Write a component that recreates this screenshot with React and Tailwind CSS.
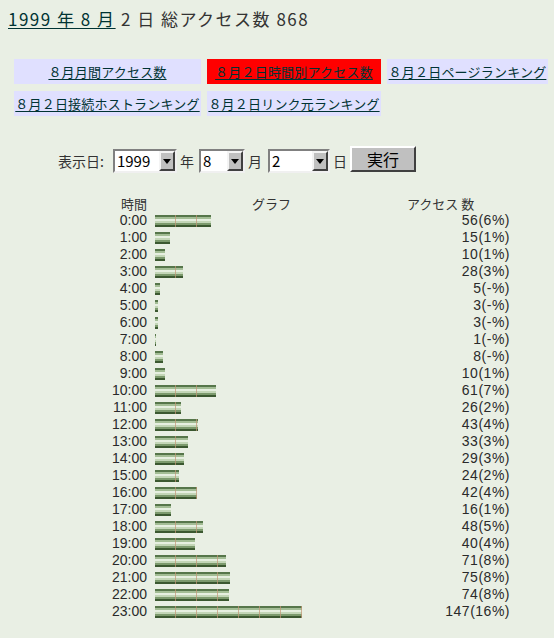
import React from 'react';

// アクセス集計ページ（時間別）
const hours = [
  [56, '6'], [15, '1'], [10, '1'], [28, '3'], [5, '-'], [3, '-'],
  [3, '-'], [1, '-'], [8, '-'], [10, '1'], [61, '7'], [26, '2'],
  [43, '4'], [33, '3'], [29, '3'], [24, '2'], [42, '4'], [16, '1'],
  [48, '5'], [40, '4'], [71, '8'], [75, '8'], [74, '8'], [147, '16'],
];

const navLinks = [
  { label: '８月月間アクセス数', active: false },
  { label: '８月２日時間別アクセス数', active: true },
  { label: '８月２日ページランキング', active: false },
  { label: '８月２日接続ホストランキング', active: false },
  { label: '８月２日リンク元ランキング', active: false },
];

const Select = ({ value, width }) => (
  <div
    className={`flex h-[24px] items-stretch border-2 border-t-[#808080] border-l-[#808080] border-b-[#f0f0f0] border-r-[#f0f0f0] bg-white ${width}`}
  >
    <span className="flex-1 pl-[2px] text-[15px] leading-[20px] text-black">{value}</span>
    <span className="flex w-[16px] items-center justify-center border-2 border-t-[#f4f4f4] border-l-[#f4f4f4] border-b-[#404040] border-r-[#404040] bg-[#c0c0c0]">
      <svg width="8" height="5" viewBox="0 0 8 5">
        <path d="M0 0h8L4 5z" fill="#000" />
      </svg>
    </span>
  </div>
);

const Bar = ({ count }) => (
  <div
    className="h-[12px] bg-[repeating-linear-gradient(90deg,transparent_0_20px,rgba(196,150,118,0.7)_20px_21px),linear-gradient(to_bottom,#56764a_0_2px,#a3bd95_2px_4px,#e6efe0_4px_6px,#c3d6b7_6px_8px,#7c9a6d_8px_10px,#3b5830_10px_12px)]"
    style={{ width: `${count}px` }}
  />
);

export default function App() {
  return (
    <div className="min-h-[638px] w-[554px] bg-[#e9efe4] font-['Noto_Sans_CJK_JP','Noto_Sans',sans-serif] text-[#333]">
      <div className="px-[8px] pt-[7px] text-[17px] leading-[24px] tracking-[1.5px]">
        <a className="text-[#003333] underline decoration-1 underline-offset-2">1999 年 8 月</a>
        <span> 2 日 総アクセス数 868</span>
      </div>

      <div className="ml-[14px] mt-[28px] grid w-[535px] grid-cols-[187px_174px_161px] gap-x-[6px] gap-y-[7px]">
        {navLinks.map((l) => (
          <div
            key={l.label}
            className={`flex h-[25px] items-center justify-center whitespace-nowrap text-[13px] leading-[18px] tracking-[0.2px] ${l.active ? 'bg-[#ff0000]' : 'bg-[#e0e0ff]'}`}
          >
            <a className="text-[#003333] underline decoration-1 underline-offset-2">{l.label}</a>
          </div>
        ))}
      </div>

      <div className="ml-[58px] mt-[30px] flex items-end gap-[3px] text-[14px] leading-[20px]">
        <span className="mb-[2px] mr-[6px]">表示日:</span>
        <Select value="1999" width="w-[64px]" />
        <span className="mb-[2px] mr-[2px]">年</span>
        <Select value="8" width="w-[46px]" />
        <span className="mb-[2px] mr-[3px]">月</span>
        <Select value="2" width="w-[62px]" />
        <span className="mb-[2px]">日</span>
        <button className="mb-[1px] h-[26px] w-[66px] border-2 border-t-[#ffffff] border-l-[#ffffff] border-b-[#404040] border-r-[#404040] bg-[#c0c0c0] text-[16px] leading-[20px] text-black">
          実行
        </button>
      </div>

      <div className="ml-[105px] mt-[22px] text-[14px] leading-[17px]">
        <div className="flex h-[17px] items-center text-[13px] leading-[15px]">
          <span className="w-[42px] text-right">時間</span>
          <span className="ml-[8px] w-[200px] pl-[97px]">グラフ</span>
          <span className="w-[155px] pl-[52px]">アクセス 数</span>
        </div>
        {hours.map(([count, pct], i) => (
          <div key={i} className="flex h-[17px] items-center font-['Liberation_Sans','Noto_Sans_CJK_JP',sans-serif] text-[#2a2a2a]">
            <span className="w-[42px] text-right">{i}:00</span>
            <div className="ml-[8px] w-[200px]">
              <Bar count={count} />
            </div>
            <span className="w-[155px] text-right tracking-[0.5px]">
              {count}({pct}%)
            </span>
          </div>
        ))}
      </div>
    </div>
  );
}
